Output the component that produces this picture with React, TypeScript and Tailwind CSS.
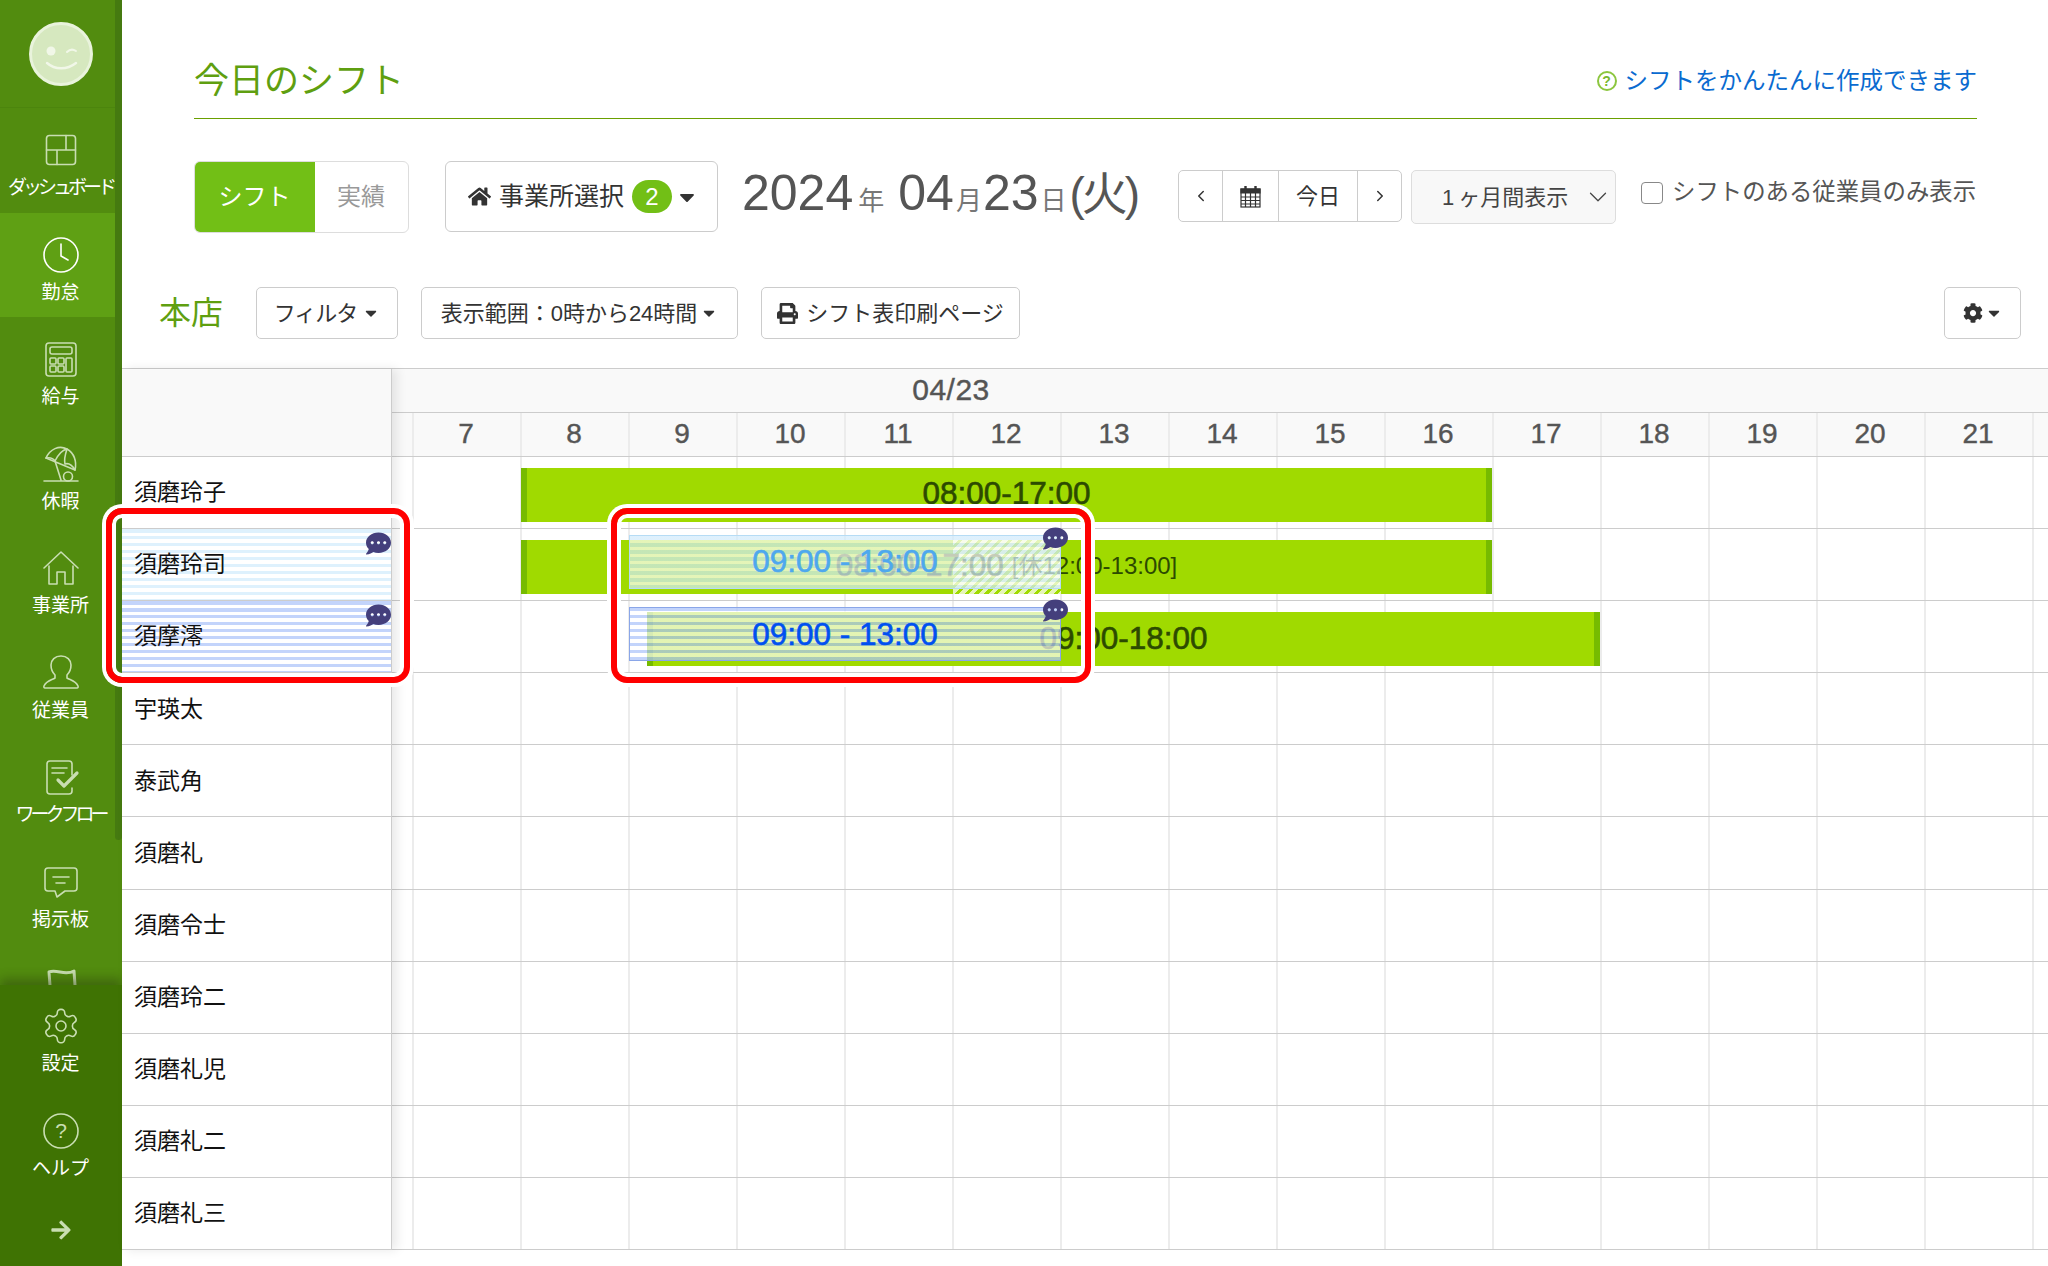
import type { ReactNode } from "react";
import { ChevronDown, ChevronLeft, ChevronRight } from "lucide-react";
import { FaArrowRight, FaCaretDown, FaCog, FaCommentDots, FaHome, FaPrint } from "react-icons/fa";

const HOURS = [7, 8, 9, 10, 11, 12, 13, 14, 15, 16, 17, 18, 19, 20, 21];
const NAMES = ["須磨玲子", "須磨玲司", "須摩澪", "宇瑛太", "泰武角", "須磨礼", "須磨令士", "須磨玲二", "須磨礼児", "須磨礼二", "須磨礼三"];

// x of an hour inside the timeline pane
const hourX = (h: number) => 21 + (h - 7) * 108;

function Icon({ children }: { children: ReactNode }) {
  return (
    <svg width="40" height="40" viewBox="0 0 40 40" fill="none" stroke="currentColor" strokeWidth="1.6" strokeLinecap="round" strokeLinejoin="round">
      {children}
    </svg>
  );
}

const NAV: { label: string; tight?: boolean; active?: boolean; icon: ReactNode }[] = [
  {
    label: "ダッシュボード",
    tight: true,
    icon: (
      <Icon>
        <rect x="5.5" y="5.5" width="29" height="29" rx="3" />
        <path d="M5.5 20h29M25 5.5V20M16 20v14.5" />
      </Icon>
    ),
  },
  {
    label: "勤怠",
    active: true,
    icon: (
      <span className="text-white">
        <Icon>
          <circle cx="20" cy="20" r="17" />
          <path d="M20 9v12l7 4" />
        </Icon>
      </span>
    ),
  },
  {
    label: "給与",
    icon: (
      <Icon>
        <rect x="5" y="4" width="30" height="33" rx="3" />
        <rect x="9" y="8" width="22" height="7" rx="2" />
        <rect x="9" y="19" width="6" height="6" rx="1" />
        <rect x="17" y="19" width="6" height="6" rx="1" />
        <rect x="9" y="27" width="6" height="6" rx="1" />
        <rect x="17" y="27" width="6" height="6" rx="1" />
        <rect x="25" y="19" width="6" height="14" rx="1" />
      </Icon>
    ),
  },
  {
    label: "休暇",
    icon: (
      <Icon>
        <path d="M5 14C9 5 18 1 26 5c7 4 10 12 8 21Z" />
        <path d="M5 14c5-1 7 0 9 3 3-6 7-11 12-12-2 6-3 11-2 15 3-1 7 1 10 6" />
        <path d="M14 17l6 19M3 37h34" />
        <circle cx="27" cy="32.5" r="4.5" />
      </Icon>
    ),
  },
  {
    label: "事業所",
    icon: (
      <Icon>
        <path d="M3 20L20 4l17 16" />
        <path d="M8 18v18h8V24h8v12h8V18" />
      </Icon>
    ),
  },
  {
    label: "従業員",
    icon: (
      <Icon>
        <path d="M14 22c-3-3-4-7-4-10C10 7 14 3 20 3s10 4 10 9c0 3-1 7-4 10v3c3 2 9 3 11 8 .4 1 0 2-1 2H4c-1 0-1.400-1-1-2 2-5 8-6 11-8Z" />
      </Icon>
    ),
  },
  {
    label: "ワークフロー",
    tight: true,
    icon: (
      <Icon>
        <path d="M31 18V7a3 3 0 0 0-3-3H9a3 3 0 0 0-3 3v27a3 3 0 0 0 3 3h19a3 3 0 0 0 3-3v-3" />
        <path d="M11 11h15M11 16h12" />
        <path d="M17 23l6 6 13-13" strokeWidth="3.200" />
      </Icon>
    ),
  },
  {
    label: "掲示板",
    icon: (
      <Icon>
        <path d="M7 6h26a3 3 0 0 1 3 3v17a3 3 0 0 1-3 3H24l-8 6-2-6H7a3 3 0 0 1-3-3V9a3 3 0 0 1 3-3Z" />
        <path d="M12 15h16M15 21h9" />
      </Icon>
    ),
  },
  {
    label: "",
    icon: (
      <Icon>
        <path d="M8 6c8-3 16 4 25-1l2 28H10Z" strokeWidth="3" />
      </Icon>
    ),
  },
];

function NavItem({ label, tight, active, icon }: { label: string; tight?: boolean; active?: boolean; icon: ReactNode }) {
  return (
    <div className={`h-[104.5px] shrink-0 pt-[22px] flex flex-col items-center pr-[1px] text-[#c9deb2] ${active ? "bg-[#5fa014]" : ""}`}>
      <div className="h-[40px] flex items-center justify-center">{icon}</div>
      <div className={`mt-[6px] h-[24px] leading-[24px] text-[19px] text-white whitespace-nowrap ${tight ? "tracking-[-4px]" : ""}`}>{label}</div>
    </div>
  );
}

function Sidebar() {
  return (
    <aside className="relative w-[122px] shrink-0 h-screen flex flex-col bg-[#528c0f] overflow-hidden">
      <div className="h-[108px] shrink-0 border-b border-[#4c850d] flex justify-center pt-[22px] pr-[1px]">
        <svg width="64" height="64" viewBox="0 0 64 64" fill="none">
          <circle cx="32" cy="32" r="30.500" fill="#d6e8bf" stroke="#e9f3dc" strokeWidth="3" />
          <circle cx="22" cy="29" r="4.500" fill="#f1f7e8" />
          <path d="M38 30c3-3 6-3 9-1" stroke="#f1f7e8" strokeWidth="2" strokeLinecap="round" />
          <path d="M18 41c8 7 20 7 29 0" stroke="#f1f7e8" strokeWidth="2.400" strokeLinecap="round" />
        </svg>
      </div>
      <nav className="flex-1 min-h-0 overflow-hidden flex flex-col">
        {NAV.map((item) => (
          <NavItem key={item.label} {...item} />
        ))}
      </nav>
      <div className="absolute left-[115px] top-0 w-[7px] h-[840px] rounded-b-[4px] bg-[#457a10]" />
      <div className="relative h-[281px] shrink-0 bg-[#3f7303] shadow-[0_-6px_10px_rgba(40,60,10,0.45)] flex flex-col">
        <div className="-mt-px">
          <NavItem
            label="設定"
            icon={
              <svg width="40" height="40" viewBox="0 0 24 24" fill="none" stroke="currentColor" strokeWidth="0.950" strokeLinecap="round" strokeLinejoin="round">
                <path d="M12.220 2h-.44a2 2 0 0 0-2 2v.18a2 2 0 0 1-1 1.730l-.43.250a2 2 0 0 1-2 0l-.15-.08a2 2 0 0 0-2.730.730l-.22.380a2 2 0 0 0 .730 2.730l.15.1a2 2 0 0 1 1 1.720v.510a2 2 0 0 1-1 1.740l-.15.090a2 2 0 0 0-.730 2.730l.22.380a2 2 0 0 0 2.730.730l.15-.08a2 2 0 0 1 2 0l.43.250a2 2 0 0 1 1 1.730V20a2 2 0 0 0 2 2h.44a2 2 0 0 0 2-2v-.18a2 2 0 0 1 1-1.730l.43-.250a2 2 0 0 1 2 0l.15.08a2 2 0 0 0 2.730-.730l.22-.390a2 2 0 0 0-.730-2.730l-.15-.08a2 2 0 0 1-1-1.740v-.5a2 2 0 0 1 1-1.740l.15-.090a2 2 0 0 0 .730-2.730l-.22-.380a2 2 0 0 0-2.730-.730l-.15.08a2 2 0 0 1-2 0l-.43-.250a2 2 0 0 1-1-1.730V4a2 2 0 0 0-2-2z" />
                <circle cx="12" cy="12" r="3" />
              </svg>
            }
          />
          <NavItem
            label="ヘルプ"
            icon={
              <Icon>
                <circle cx="20" cy="20" r="17" />
                <text x="20" y="27" textAnchor="middle" fontSize="21" fill="currentColor" stroke="none">?</text>
              </Icon>
            }
          />
        </div>
        <div className="flex justify-center mt-[26px] pr-[1px] text-[#c9deb2]">
          <FaArrowRight size={22} />
        </div>
      </div>
    </aside>
  );
}

function OutlineButton({ children, className }: { children: ReactNode; className: string }) {
  return (
    <div className={`flex items-center justify-center h-[52px] border border-[#ccc] rounded-[5px] text-[22px] text-[#333] whitespace-nowrap ${className}`}>
      {children}
    </div>
  );
}

function Toolbar() {
  return (
    <div className="flex items-start mt-[42px] ml-[72px] mr-[71px] h-[72px]">
      <div className="flex w-[215px] h-[72px] rounded-[6px] overflow-hidden border border-[#ddd]">
        <div className="w-[121px] -m-px bg-[#72bf16] text-white text-[24px] flex items-center justify-center">シフト</div>
        <div className="flex-1 text-[#999] text-[24px] flex items-center justify-center">実績</div>
      </div>
      <div className="ml-[36px] w-[273px] h-[71px] pl-[4px] border border-[#ccc] rounded-[6px] flex items-center justify-center text-[25px] text-[#333] whitespace-nowrap">
        <FaHome size={23} className="mr-[8px]" />
        事業所選択
        <span className="ml-[8px] w-[40px] h-[33px] rounded-full bg-[#72bf16] text-white text-[24px] flex items-center justify-center">2</span>
        <FaCaretDown size={24} className="ml-[3px]" />
      </div>
      <div className="ml-[24px] w-[436px] h-[64px] flex items-baseline text-[50px] leading-[64px] text-[#555] whitespace-nowrap">
        2024<span className="text-[26px] text-[#777] ml-[5px]">年</span>
        <span className="ml-[14px]">04</span>
        <span className="text-[26px] text-[#777] ml-[2px]">月</span>
        <span className="ml-[1px]">23</span>
        <span className="text-[26px] text-[#777] ml-[2px]">日</span>
        <span className="text-[46px] ml-[3px] tracking-[-3px]">(火)</span>
      </div>
      <div className="mt-[9px] flex w-[224px] h-[52px] border border-[#ccc] rounded-[5px] text-[#333] text-[22px]">
        <div className="w-[44px] flex items-center justify-center border-r border-[#ccc]"><ChevronLeft size={18} /></div>
        <div className="w-[56px] flex items-center justify-center border-r border-[#ccc]">
          <svg width="21" height="23" viewBox="0 0 21 23" fill="none" stroke="#333" strokeWidth="1.2">
            <rect x="1" y="4" width="19" height="18" fill="#fff" />
            <path d="M1 4h19v4H1z" fill="#333" />
            <path d="M1 12h19M1 15.500h19M1 19h19M5.500 8v14M10.500 8v14M15.500 8v14" />
            <path d="M5.500 1v5M15.500 1v5" strokeWidth="2.400" />
          </svg>
        </div>
        <div className="w-[79px] flex items-center justify-center border-r border-[#ccc]">今日</div>
        <div className="flex-1 flex items-center justify-center"><ChevronRight size={18} /></div>
      </div>
      <div className="mt-[9px] ml-[9px] w-[205px] h-[54px] bg-[#f8f8f8] border border-[#ddd] rounded-[5px] flex items-center pl-[30px] text-[22px] text-[#444] whitespace-nowrap">
        1<span className="ml-[4px]">ヶ</span>月間表示
        <ChevronDown size={30} strokeWidth={1} className="ml-[15px]" />
      </div>
      <div className="mt-[20px] ml-[25px] flex items-center h-[24px] text-[23.400px] text-[#555] whitespace-nowrap">
        <input type="checkbox" readOnly className="appearance-none w-[22px] h-[22px] border border-[#888] rounded-[4px] bg-white mr-[9px]" />
        シフトのある従業員のみ表示
      </div>
    </div>
  );
}

function Cells({ header }: { header?: boolean }) {
  return (
    <div className="absolute inset-0 flex">
      <div className="w-[22px] shrink-0 border-r-2 border-[#ececec]" />
      {HOURS.map((h) => (
        <div key={h} className={`w-[108px] shrink-0 border-r-2 border-[#ececec] flex items-center justify-center ${header ? "pr-[2px] pb-[2px] text-[28px] text-[#555] [-webkit-text-stroke:0.4px_#555]" : ""}`}>
          {header ? h : null}
        </div>
      ))}
    </div>
  );
}

function Bar({ from, to, children }: { from: number; to: number; children?: ReactNode }) {
  const left = hourX(from);
  const width = hourX(to) - left - 1;
  return (
    <div
      className="absolute top-[11px] h-[54px] pb-[2px] bg-[#a0da00] border-x-[6px] border-[#76bb00] flex items-center justify-center whitespace-nowrap text-[31.500px] text-[#2c4a00] [-webkit-text-stroke:0.6px_#2c4a00]"
      style={{ left, width }}
    >
      {children}
    </div>
  );
}

function Bubble({ className }: { className: string }) {
  return <FaCommentDots size={25} className={`absolute text-[#443f7c] ${className}`} />;
}

function Overlay({ tone, text }: { tone: "light" | "deep"; text: string }) {
  const left = hourX(9);
  const width = hourX(13) - left;
  return (
    <div
      className={`absolute top-[6px] h-[54px] border flex items-center justify-center text-[31.500px] whitespace-nowrap [-webkit-text-stroke:0.6px_currentColor] ${
        tone === "light"
          ? "border-[#b6dcf5] text-[#4ea8ee] bg-[repeating-linear-gradient(180deg,rgba(210,235,252,0.72)_0px,rgba(210,235,252,0.72)_3.5px,rgba(255,255,255,0.72)_3.5px,rgba(255,255,255,0.72)_7px)]"
          : "border-[#8aa6e8] text-[#0050f0] bg-[repeating-linear-gradient(180deg,rgba(174,197,250,0.74)_0px,rgba(174,197,250,0.74)_3.5px,rgba(255,255,255,0.7)_3.5px,rgba(255,255,255,0.7)_7px)]"
      }`}
      style={{ left, width }}
    >
      {text}
      <Bubble className="-top-[10px] -right-[8px]" />
    </div>
  );
}

function TimeRow({ index }: { index: number }) {
  return (
    <div className="relative h-[72.1px] border-b border-[#ccc]">
      <Cells />
      {index === 0 && <Bar from={8} to={17}>08:00-17:00</Bar>}
      {index === 1 && (
        <>
          <Bar from={8} to={17}>
            {/* break period hatch sits under the label */}
            <div
              className="absolute top-0 h-full bg-[repeating-linear-gradient(135deg,rgba(255,255,255,0.72)_0px,rgba(255,255,255,0.72)_4px,transparent_4px,transparent_7px)]"
              style={{ left: hourX(12) - hourX(8) - 6, width: 108 }}
            />
            <span className="relative">08:00-17:00</span>
            <span className="relative ml-[8px] text-[24px] [-webkit-text-stroke:0px]">[休12:00-13:00]</span>
          </Bar>
          <Overlay tone="light" text="09:00 - 13:00" />
        </>
      )}
      {index === 2 && (
        <>
          <Bar from={9 + 10 / 60} to={18}>09:00-18:00</Bar>
          <Overlay tone="deep" text="09:00 - 13:00" />
        </>
      )}
    </div>
  );
}

function Schedule() {
  return (
    <div className="flex mt-[29px] border-t border-[#ccc]">
      <div className="relative z-10 w-[270px] shrink-0 bg-white border-r border-[#ccc] shadow-[5px_0_10px_rgba(0,0,0,0.09)]">
        <div className="h-[88px] bg-[#f9f9f9] border-b border-[#ccc]" />
        {NAMES.map((name, i) => (
          <div
            key={name}
            className={`relative h-[72.1px] border-b border-[#ccc] flex items-center pl-[12px] text-[23px] text-[#111] ${
              i === 1
                ? "bg-[repeating-linear-gradient(180deg,#def1fd_0px,#def1fd_3.5px,#ffffff_3.5px,#ffffff_7px)]"
                : i === 2
                  ? "bg-[repeating-linear-gradient(180deg,#c3d4fb_0px,#c3d4fb_3.5px,#ffffff_3.5px,#ffffff_7px)]"
                  : ""
            }`}
          >
            {name}
            {(i === 1 || i === 2) && <Bubble className="top-[2px] right-[0px]" />}
          </div>
        ))}
      </div>
      <div className="flex-1 min-w-0 overflow-hidden">
        <div className="h-[44px] bg-[#f9f9f9] border-b border-[#ccc] w-full">
          <div className="w-[1118px] text-center text-[30px] tracking-[0.5px] leading-[42px] text-[#555] [-webkit-text-stroke:0.4px_#555]">04/23</div>
        </div>
        <div className="relative h-[44px] bg-[#f9f9f9] border-b border-[#ccc]">
          <Cells header />
        </div>
        {NAMES.map((name, i) => (
          <TimeRow key={name} index={i} />
        ))}
      </div>
    </div>
  );
}

export default function App() {
  return (
    <div className="relative flex min-h-screen bg-white font-['Liberation_Sans','Noto_Sans_CJK_JP',sans-serif]">
      <Sidebar />
      <main className="flex-1 min-w-0">
        <div className="ml-[72px] mr-[71px] h-[119px] border-b border-[#6aa000] flex items-end justify-between pb-[15px]">
          <h1 className="text-[35px] leading-[44px] text-[#5f9f10]">今日のシフト</h1>
          <div className="flex items-center text-[23.500px] leading-[36px] text-[#0a6bd0] pb-[4px]">
            <span className="w-[20px] h-[20px] mr-[8px] rounded-full border-2 border-[#8cc63f] text-[#7ab82e] text-[14px] font-bold flex items-center justify-center">?</span>
            シフトをかんたんに作成できます
          </div>
        </div>
        <Toolbar />
        <div className="flex items-center mt-[54px] ml-[37px] mr-[27px]">
          <div className="text-[32px] leading-[52px] text-[#5f9f10] w-[97px]">本店</div>
          <OutlineButton className="w-[142px]">
            <span className="tracking-[-1px]">フィルタ</span>
            <FaCaretDown size={18} className="ml-[5px]" />
          </OutlineButton>
          <OutlineButton className="w-[317px] ml-[23px]">
            表示範囲：0時から24時間
            <FaCaretDown size={18} className="ml-[3px]" />
          </OutlineButton>
          <OutlineButton className="w-[259px] ml-[23px]">
            <FaPrint size={21} className="mr-[8px]" />
            シフト表印刷ページ
          </OutlineButton>
          <OutlineButton className="w-[77px] ml-auto">
            <FaCog size={20} />
            <FaCaretDown size={18} className="ml-[2px]" />
          </OutlineButton>
        </div>
        <Schedule />
      </main>
      {/* red callouts drawn over the sheet */}
      <div className="absolute left-[106px] top-[508px] w-[304px] h-[175px] z-20 rounded-[16px] border-[6px] border-[#ff0000] shadow-[0_0_0_4px_#ffffff,inset_0_0_0_4px_#ffffff]" />
      <div className="absolute left-[611px] top-[508px] w-[480px] h-[175px] z-20 rounded-[16px] border-[6px] border-[#ff0000] shadow-[0_0_0_4px_#ffffff,inset_0_0_0_4px_#ffffff]" />
    </div>
  );
}
